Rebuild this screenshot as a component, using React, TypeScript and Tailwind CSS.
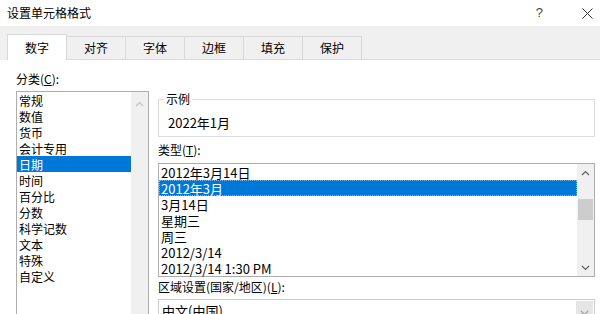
import React from 'react';

const tabs = ['数字', '对齐', '字体', '边框', '填充', '保护'];
const categories = ['常规', '数值', '货币', '会计专用', '日期', '时间', '百分比', '分数', '科学记数', '文本', '特殊', '自定义'];
const types = ['2012年3月14日', '2012年3月', '3月14日', '星期三', '周三', '2012/3/14', '2012/3/14 1:30 PM'];

const Chevron = ({ up, color }: { up?: boolean; color: string }) => (
  <svg width="9" height="6" viewBox="0 0 9 6" fill="none">
    <path d={up ? 'M1 5L4.5 1.5L8 5' : 'M1 1L4.5 4.5L8 1'} stroke={color} strokeWidth="1.2" />
  </svg>
);

const App = () => {
  return (
    <div
      className="w-[600px] h-[314px] overflow-hidden bg-white text-black flex flex-col"
      style={{ fontFamily: '"Noto Sans CJK SC", "Noto Sans", sans-serif' }}
    >
      {/* title bar */}
      <div className="h-[26px] shrink-0 flex items-center justify-between pl-[7px] pr-[6px]">
        <span className="text-[12px] leading-[16px]">设置单元格格式</span>
        <div className="flex items-center">
          <span className="text-[13px] leading-[16px] text-[#444] mr-[39px]" style={{ fontFamily: '"Liberation Sans", sans-serif' }}>?</span>
          <svg width="11" height="11" viewBox="0 0 11 11" className="mr-[1px]">
            <path d="M0.5 0.5L10.5 10.5M10.5 0.5L0.5 10.5" stroke="#333" strokeWidth="1" />
          </svg>
        </div>
      </div>

      {/* tab strip */}
      <div className="h-[34px] shrink-0 bg-[#f0f0f0] flex items-end pl-[7px]">
        {tabs.map((t, i) =>
          i === 0 ? (
            <div
              key={t}
              className="w-[60px] h-[26px] bg-white border border-b-0 border-[#d9d9d9] flex items-center justify-center text-[12px] leading-[16px] relative z-10"
            >
              {t}
            </div>
          ) : (
            <div
              key={t}
              className="w-[60px] h-[24px] -ml-px bg-[#f0f0f0] border border-[#d9d9d9] flex items-center justify-center text-[12px] leading-[16px]"
            >
              {t}
            </div>
          )
        )}
        <div className="flex-1 h-px bg-[#d9d9d9]" />
      </div>

      {/* content */}
      <div className="flex flex-1 pl-[16px] gap-[9px] text-[12px] leading-[16px]">
        {/* category */}
        <div className="w-[133px] pt-[11px] flex flex-col">
          <div>
            分类(<span className="underline">C</span>):
          </div>
          <div className="mt-[4px] h-[240px] border border-[#adadad] flex">
            <div className="flex-1 flex flex-col">
              {categories.map(c => (
                <div
                  key={c}
                  className={`h-[16px] pl-[2px] flex items-center leading-[15px] ${c === '日期' ? 'bg-[#0078d7] text-white' : ''}`}
                >
                  {c}
                </div>
              ))}
            </div>
            <div className="w-[17px] bg-[#f0f0f0] flex flex-col items-center pt-[9px]">
              <Chevron up color="#c2c2c2" />
            </div>
          </div>
        </div>

        {/* right side */}
        <div className="w-[437px] pt-[39px] flex flex-col">
          <div className="h-[38px] border border-[#dcdcdc] relative flex items-end pl-[9px] pb-[5px]">
            <span className="absolute -top-[9px] left-[5px] bg-white px-[2px] text-[12px] leading-[16px]">示例</span>
            <span className="text-[13px] leading-[16px]">2022年1月</span>
          </div>

          <div className="mt-[5px] text-[12px] leading-[16px]">
            类型(<span className="underline">T</span>):
          </div>
          <div className="mt-[5px] h-[114px] border border-[#adadad] flex">
            <div className="flex-1 flex flex-col text-[13px] leading-[15px]">
              {types.map(t => (
                <div
                  key={t}
                  className={`h-[16px] pl-[2px] flex items-center ${t === '2012年3月' ? 'bg-[#0078d7] text-white outline-1 outline-dotted outline-offset-[-1px] outline-[#7fb4e6]' : ''}`}
                >
                  {t}
                </div>
              ))}
            </div>
            <div className="w-[17px] bg-[#f0f0f0] flex flex-col items-center">
              <div className="h-[17px] flex items-center justify-center">
                <Chevron up color="#606060" />
              </div>
              <div className="mt-[18px] w-[15px] h-[21px] bg-[#cdcdcd]" />
              <div className="flex-1" />
              <div className="h-[17px] flex items-center justify-center">
                <Chevron color="#606060" />
              </div>
            </div>
          </div>

          <div className="mt-[2px] text-[12px] leading-[16px]">
            区域设置(国家/地区)(<span className="underline">L</span>):
          </div>
          <div className="mt-[4px] h-[24px] border border-[#cccccc] flex">
            <div className="flex-1 pl-[3px] pt-[3px] text-[13px] leading-[16px]">中文(中国)</div>
            <div className="w-[17px] bg-[#e5e5e5] flex justify-center pt-[9px] mr-px mt-px">
              <Chevron color="#a0a0a0" />
            </div>
          </div>
        </div>
      </div>
    </div>
  );
};

export default App;
